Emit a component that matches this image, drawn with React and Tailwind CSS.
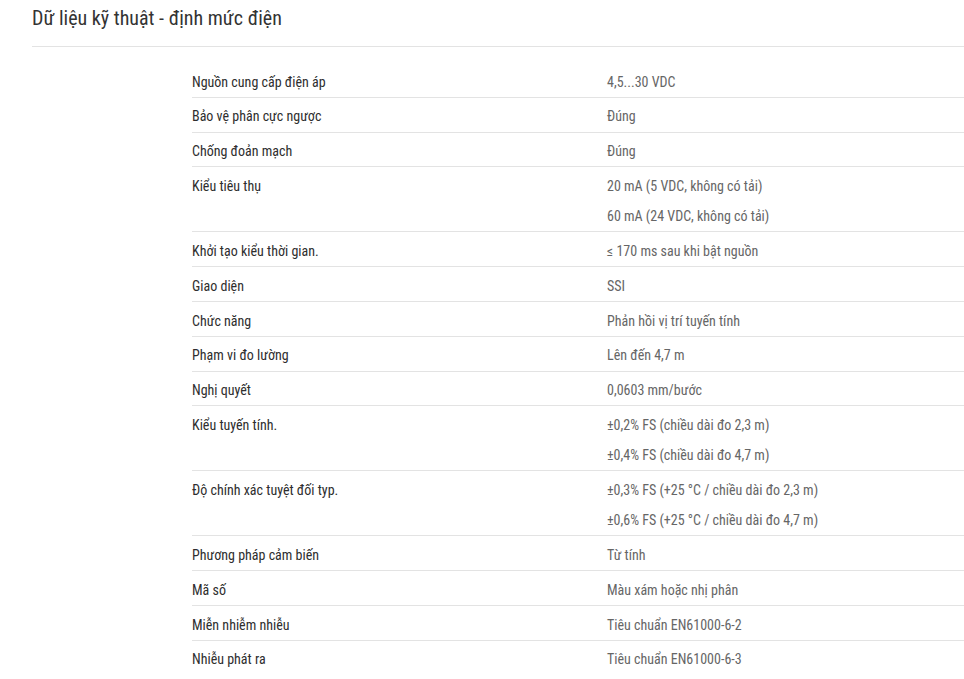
const specs = [
    { label: 'Nguồn cung cấp điện áp', values: ['4,5...30 VDC'] },
    { label: 'Bảo vệ phân cực ngược', values: ['Đúng'] },
    { label: 'Chống đoản mạch', values: ['Đúng'] },
    { label: 'Kiểu tiêu thụ', values: ['20 mA (5 VDC, không có tải)', '60 mA (24 VDC, không có tải)'] },
    { label: 'Khởi tạo kiểu thời gian.', values: ['≤ 170 ms sau khi bật nguồn'] },
    { label: 'Giao diện', values: ['SSI'] },
    { label: 'Chức năng', values: ['Phản hồi vị trí tuyến tính'] },
    { label: 'Phạm vi đo lường', values: ['Lên đến 4,7 m'] },
    { label: 'Nghị quyết', values: ['0,0603 mm/bước'] },
    { label: 'Kiểu tuyến tính.', values: ['±0,2% FS (chiều dài đo 2,3 m)', '±0,4% FS (chiều dài đo 4,7 m)'] },
    { label: 'Độ chính xác tuyệt đối typ.', values: ['±0,3% FS (+25 °C / chiều dài đo 2,3 m)', '±0,6% FS (+25 °C / chiều dài đo 4,7 m)'] },
    { label: 'Phương pháp cảm biến', values: ['Từ tính'] },
    { label: 'Mã số', values: ['Màu xám hoặc nhị phân'] },
    { label: 'Miễn nhiễm nhiễu', values: ['Tiêu chuẩn EN61000-6-2'] },
    { label: 'Nhiễu phát ra', values: ['Tiêu chuẩn EN61000-6-3'] },
];

export default function App() {
    return (
        <div className="min-h-screen bg-white font-['Roboto_Condensed','Roboto',sans-serif]">
            {/* Header */}
            <div className="pl-[32px] pt-[6px]">
                <h2 className="text-[20px] leading-[24px] text-[#333] pb-[16px] border-b border-[#e3e3e3]">
                    Dữ liệu kỹ thuật - định mức điện
                </h2>
            </div>

            {/* Spec table */}
            <div className="ml-[192px] mt-[16px]">
                {specs.map((row, i) => (
                    <div
                        key={row.label}
                        className={`flex text-[14px] pt-[3.6px] ${i > 0 ? 'border-t border-[#e3e3e3]' : ''}`}
                    >
                        <div className="w-[415px] shrink-0 leading-[30.2px] text-[#2e2e2e]">{row.label}</div>
                        <div className="flex-1 text-[#666]">
                            {row.values.map((v) => (
                                <div key={v} className="leading-[30.2px]">{v}</div>
                            ))}
                        </div>
                    </div>
                ))}
            </div>
        </div>
    );
}
